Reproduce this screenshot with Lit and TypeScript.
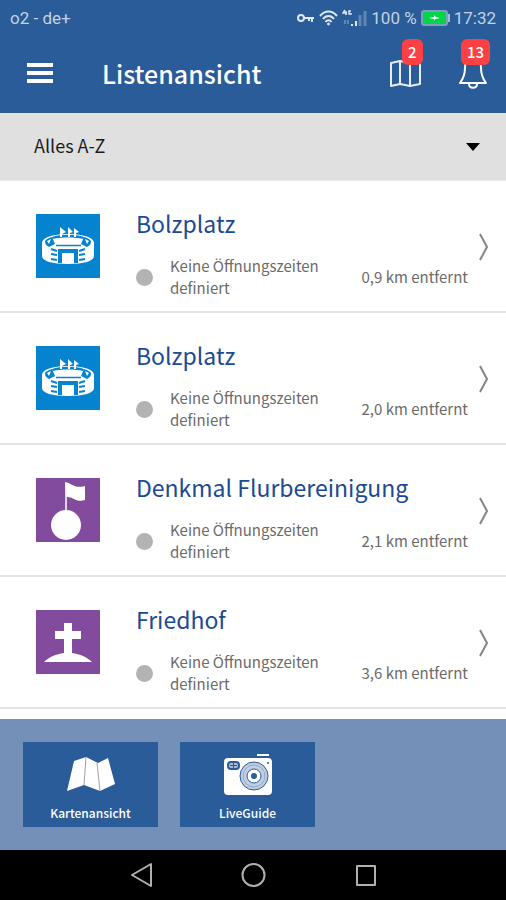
import { LitElement, html, css, svg } from "lit";
import { customElement, property } from "lit/decorators.js";

type PlaceKind = "stadium" | "monument" | "cemetery";

interface Place {
  name: string;
  kind: PlaceKind;
  distance: string;
}

const PLACES: Place[] = [
  { name: "Bolzplatz", kind: "stadium", distance: "0,9" },
  { name: "Bolzplatz", kind: "stadium", distance: "2,0" },
  { name: "Denkmal Flurbereinigung", kind: "monument", distance: "2,1" },
  { name: "Friedhof", kind: "cemetery", distance: "3,6" },
];

const stadium = svg`
  <path d="M6 29C6 17 58 17 58 29V42C58 47 48 50 32 50S6 47 6 42z" fill="#fff"/>
  <path d="M16 23C24 20 40 20 48 23L47 25C40 23 24 23 17 25z" fill="#0583cf"/>
  <path d="M9 27C10 25 13 24 16 23L19 30L13 33C10 31 9 30 9 27zM55 27C54 25 51 24 48 23L45 30L51 33C54 31 55 30 55 27z" fill="#0583cf"/>
  <path d="M11 27L15 25L13 30zM53 27L49 25L51 30z" fill="#fff"/>
  <path d="M24 23V13L30 18L26 20V23zM32 23V13L37 18L34 19V23zM38 23V14L43 18L40 19V23z" fill="#fff"/>
  <path d="M20 31.500H45" stroke="#0583cf" stroke-width="1.500"/>
  <path d="M15 35L21 37M15 40L21 41M15 45L21 46M49 35L43 37M49 40L43 41M49 45L43 46" stroke="#0583cf" stroke-width="2"/>
  <path d="M22 35H42V49H38V39H26V49H22z" fill="#0583cf"/>`;

const monument = svg`
  <circle cx="30" cy="47" r="15" fill="#fff"/>
  <path d="M30 34V5" stroke="#fff" stroke-width="1.500"/>
  <path d="M29 4C36 5 38 11 49 8V22C40 25 37 18 30 19z" fill="#fff"/>`;

const cemetery = svg`
  <path d="M28 13h8v8h9v8h-9v14C44 44 51 47 56 52H8C13 47 20 44 28 43V29h-9v-8h9z" fill="#fff"/>`;

const ART = { stadium, monument, cemetery };

@customElement("place-row")
export class PlaceRow extends LitElement {
  @property({ attribute: false }) place!: Place;

  static styles = css`
    :host {
      display: block;
      border-bottom: 2px solid #e3e3e3;
    }
    .row {
      display: grid;
      grid-template-columns: 64px 1fr 12px;
      column-gap: 36px;
      min-height: 130px;
      box-sizing: border-box;
      padding: 26px 16px 12px 36px;
      color: #6b6b6b;
      text-decoration: none;
    }
    .tile {
      width: 64px;
      height: 64px;
      margin-top: 7px;
      background: #0583cf;
    }
    .purple {
      background: #824b9e;
    }
    .info {
      display: flex;
      flex-direction: column;
      justify-content: space-between;
      min-width: 0;
      margin-right: -26px;
    }
    .name {
      margin: 0;
      font-size: 23px;
      line-height: 32px;
      font-weight: 400;
      color: #1c4a93;
    }
    .meta {
      display: flex;
      align-items: center;
      font-size: 15px;
      line-height: 22px;
    }
    .dot {
      flex: none;
      width: 17px;
      height: 17px;
      border-radius: 50%;
      background: #b3b3b3;
    }
    .hours {
      width: 160px;
      margin-left: 17px;
    }
    .distance {
      margin-left: auto;
      white-space: nowrap;
    }
    .chevron {
      width: 12px;
      height: 28px;
      margin-top: 26px;
    }
  `;

  render() {
    const { name, kind, distance } = this.place;
    return html`<a class="row" href="#detail">
      <svg class="tile ${kind === "stadium" ? "" : "purple"}" viewBox="0 0 64 64" aria-hidden="true">
        ${ART[kind]}
      </svg>
      <div class="info">
        <h2 class="name">${name}</h2>
        <div class="meta">
          <span class="dot"></span>
          <span class="hours">Keine Öffnungszeiten definiert</span>
          <span class="distance">${distance} km entfernt</span>
        </div>
      </div>
      <svg class="chevron" viewBox="0 0 12 28" fill="none" stroke="#858585" stroke-width="2" aria-hidden="true">
        <path d="M2 1L9 14L2 27" />
      </svg>
    </a>`;
  }
}

@customElement("app-root")
export class AppRoot extends LitElement {
  static styles = css`
    :host {
      display: flex;
      flex-direction: column;
      height: 100vh;
      background: #fff;
      font-family: "Noto Sans CJK SC", "Open Sans", sans-serif;
    }
    button {
      font: inherit;
      color: inherit;
      background: none;
      border: 0;
      padding: 0;
      cursor: pointer;
    }
    svg {
      display: block;
    }
    .top {
      flex: none;
      background: #295c98;
      color: #fff;
    }
    .status {
      display: flex;
      align-items: center;
      gap: 4px;
      height: 36px;
      padding: 0 10px;
      font-family: Roboto, sans-serif;
      font-size: 17px;
      line-height: 20px;
      color: #c3d2e5;
    }
    .carrier {
      margin-right: auto;
    }
    .bar {
      display: flex;
      align-items: center;
      height: 73px;
      padding: 0 15px 4px 26px;
    }
    .title {
      margin: 0 auto 0 48px;
      font-size: 25px;
      line-height: 32px;
      font-weight: 500;
    }
    .action {
      position: relative;
      width: 36px;
      height: 32px;
      margin-left: 32px;
    }
    .action svg {
      margin: 0 auto;
    }
    .badge {
      position: absolute;
      bottom: 24px;
      left: 15px;
      box-sizing: border-box;
      min-width: 20px;
      padding: 0 6px;
      border-radius: 6px;
      background: #fb4144;
      font-size: 15px;
      line-height: 26px;
      font-weight: 500;
    }
    .wide {
      left: 6px;
    }
    .filter {
      flex: none;
      display: grid;
      align-items: center;
      height: 67px;
      background: #e0e0e0;
      border-bottom: 1px solid #ebebeb;
    }
    .select,
    .caret {
      grid-area: 1 / 1;
    }
    .select {
      appearance: none;
      height: 100%;
      padding: 0 34px 4px;
      border: 0;
      background: none;
      font: inherit;
      font-size: 18px;
      color: #1b1b1b;
    }
    .caret {
      justify-self: end;
      margin-right: 26px;
      pointer-events: none;
    }
    .list {
      flex: 1;
      min-height: 0;
      overflow-y: auto;
      scrollbar-width: none;
    }
    .dock {
      flex: none;
      display: flex;
      gap: 22px;
      padding: 23px;
      background: #7490b9;
      color: #fff;
    }
    .tile {
      display: flex;
      flex-direction: column;
      align-items: center;
      justify-content: space-between;
      width: 135px;
      height: 85px;
      padding: 12px 0 4px;
      background: #295c98;
      font-size: 12px;
      line-height: 20px;
      font-weight: 500;
    }
    .nav {
      flex: none;
      display: flex;
      align-items: center;
      justify-content: center;
      gap: 88px;
      height: 50px;
      background: #000;
    }
  `;

  private statusBar() {
    return html`<div class="status">
      <span class="carrier">o2 - de+</span>
      <svg width="20" height="14" viewBox="0 0 20 14" fill="none" stroke="#dfe8f2" stroke-width="2">
        <circle cx="6" cy="7" r="3" />
        <path d="M9 7H19M17 7V11M14 7V10" />
      </svg>
      <svg width="19" height="17" viewBox="0 0 19 17" fill="none" stroke="#dfe8f2" stroke-width="2">
        <path d="M1 6C6 0 13 0 18 6M4 9C7 5 12 5 15 9M6.500 12C8 9.500 11 9.500 12.500 12" />
        <circle cx="9.500" cy="14" r="1" fill="#dfe8f2" stroke-width="1" />
      </svg>
      <svg width="25" height="18" viewBox="0 0 25 18" fill="none">
        <path d="M3 1L1 4H5M4 2V6M9 2H7V5H9V4" stroke="#dfe8f2" stroke-width="1.500" />
        <path d="M3 11V15M6 11V15" stroke="#6286b4" stroke-width="2" />
        <path d="M10 17V15M14 17V12" stroke="#dfe8f2" stroke-width="2" />
        <path d="M18 17V6M23 17V2" stroke="#6286b4" stroke-width="3" />
      </svg>
      <span>100 %</span>
      <svg width="29" height="16" viewBox="0 0 29 16">
        <rect x="1" y="1" width="25" height="14" rx="2" fill="#00d648" stroke="#7f9dc2" stroke-width="2" />
        <rect x="27" y="4" width="2" height="8" fill="#a9bcd6" />
        <path d="M8 8L13 7V5L15 7L19 8L14 9V11L13 9z" fill="#fff" />
      </svg>
      <span>17:32</span>
    </div>`;
  }

  private header() {
    return html`<header class="top">
      ${this.statusBar()}
      <div class="bar">
        <button class="menu" aria-label="Menü">
          <svg width="28" height="20" viewBox="0 0 28 20">
            <path d="M1 2H27M1 10H27M1 18H27" stroke="#fff" stroke-width="4" />
          </svg>
        </button>
        <h1 class="title">Listenansicht</h1>
        <button class="action" aria-label="Karte">
          <svg width="32" height="32" viewBox="0 0 32 32" fill="none" stroke="#e6edf6" stroke-width="2" stroke-linejoin="round">
            <path d="M2 6L11 4L21 6L31 4V27L21 29L11 27L2 29zM11 4V27M21 6V29" />
          </svg>
          <span class="badge">2</span>
        </button>
        <button class="action" aria-label="Mitteilungen">
          <svg width="32" height="32" viewBox="0 0 32 32" fill="none" stroke="#fff" stroke-width="2" stroke-linejoin="round">
            <path d="M16 2C10 2 8 6 8 11C8 18 6 22 3 26H29C26 22 24 18 24 11C24 6 22 2 16 2zM12 27C12 32 20 32 20 27" />
          </svg>
          <span class="badge wide">13</span>
        </button>
      </div>
    </header>`;
  }

  private dock() {
    return html`<div class="dock">
      <button class="tile">
        <svg width="50" height="38" viewBox="0 -2 50 38">
          <path d="M8 5L20 1L32 7L42 2L49 28L34 35L18 29L1 35z" fill="#fff" />
          <path d="M20 1L18 29M31 7L34 35" stroke="#a1a1a8" />
        </svg>
        <span>Kartenansicht</span>
      </button>
      <button class="tile">
        <svg width="50" height="42" viewBox="0 0 50 42">
          <path d="M34 1H46" stroke="#fff" stroke-width="2" />
          <rect x="1" y="4" width="48" height="37" rx="4" fill="#fff" />
          <rect x="5" y="8" width="11" height="7" rx="3" fill="#a9bcd6" stroke="#295c98" stroke-width="2" />
          <path d="M7 11.500H14M10.500 9V14" stroke="#295c98" />
          <circle cx="31" cy="22" r="14" fill="#c2cfe2" stroke="#295c98" />
          <circle cx="31" cy="22" r="11" fill="none" stroke="#8fa7c9" />
          <circle cx="31" cy="22" r="7" fill="#fff" stroke="#295c98" />
          <circle cx="31" cy="22" r="3" fill="#295c98" />
          <circle cx="45" cy="9" r="1" fill="#295c98" />
        </svg>
        <span>LiveGuide</span>
      </button>
    </div>`;
  }

  private navBar() {
    const icon = (label: string, shape: unknown) => html`<button aria-label=${label}>
      <svg width="25" height="26" viewBox="0 0 25 26" fill="none" stroke="#b0b0b0" stroke-width="2" stroke-linejoin="round">
        ${shape}
      </svg>
    </button>`;
    return html`<nav class="nav">
      ${icon("Zurück", svg`<path d="M23 2V24L4 13z" />`)}
      ${icon("Startseite", svg`<circle cx="12.500" cy="13" r="11" />`)}
      ${icon("Übersicht", svg`<rect x="3" y="4" width="18" height="19" />`)}
    </nav>`;
  }

  render() {
    return html`
      ${this.header()}
      <div class="filter">
        <select class="select" aria-label="Sortierung">
          <option>Alles A-Z</option>
        </select>
        <svg class="caret" width="14" height="8" viewBox="0 0 14 8"><path d="M0 0H14L7 8z" fill="#000" /></svg>
      </div>
      <main class="list">${PLACES.map((p) => html`<place-row .place=${p}></place-row>`)}</main>
      ${this.dock()} ${this.navBar()}
    `;
  }
}
